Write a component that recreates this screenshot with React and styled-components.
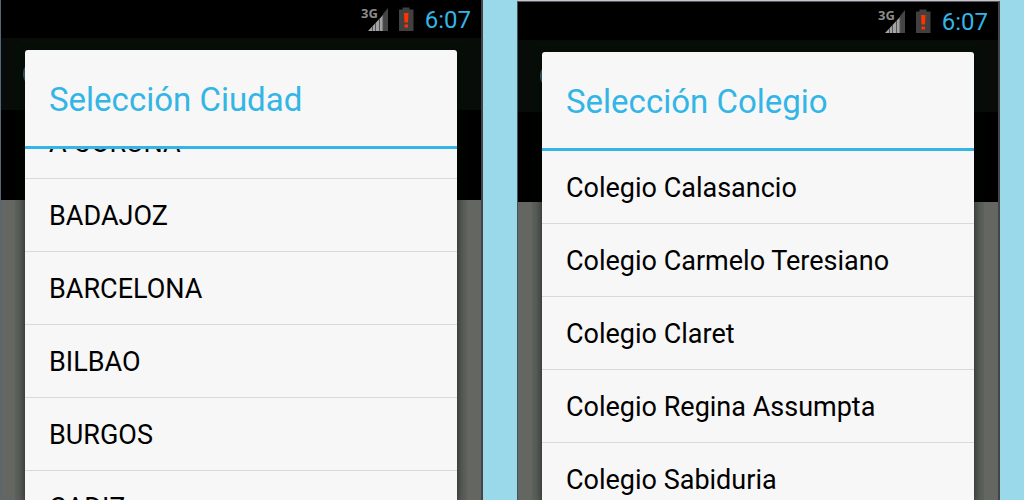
import React, { useEffect, useRef } from "react";
import styled, { createGlobalStyle } from "styled-components";

const GlobalStyle = createGlobalStyle`
  * {
    box-sizing: border-box;
  }

  body {
    margin: 0;
    background-color: #9ad9ea;
    font-family: Roboto, "Liberation Sans", sans-serif;
  }
`;

const StyledPage = styled.main`
  display: flex;
  gap: 34px;
  height: 100vh;
  padding-right: 24px;
  overflow: hidden;
`;

const StyledFrame = styled.div`
  flex: 1;
  min-width: 0;
  display: flex;
  border-top: ${props => (props.$framed ? "1px solid #c8c4d0" : "none")};
`;

const StyledPhone = styled.section`
  position: relative;
  flex: 1;
  min-width: 0;
  display: flex;
  flex-direction: column;
  background-color: #646662;
  border-left: 1px solid ${props => props.$edge};
  border-right: 2px solid #444;
  border-top: ${props => (props.$framed ? "1px solid #5a5a5e" : "none")};
`;

const StyledStatusBar = styled.header`
  display: flex;
  justify-content: flex-end;
  align-items: center;
  height: 38px;
  padding: 2px 10px 0 0;
  background-color: #000;
`;

const StyledNetwork = styled.svg`
  width: 28px;
  height: 26px;
  margin-right: 9px;
`;

const StyledBattery = styled.svg`
  width: 16px;
  height: 26px;
  margin-right: 11px;
`;

const StyledClock = styled.time`
  color: #33b5e5;
  font-size: 24px;
  line-height: 36px;
`;

const StyledActionBar = styled.div`
  display: flex;
  align-items: center;
  height: 72px;
  padding-left: 22px;
  background-color: #080c08;
`;

const StyledAppIcon = styled.span`
  width: 28px;
  height: 28px;
  border-radius: 50%;
  background-color: #4c7880;
`;

const StyledBanner = styled.div`
  height: 90px;
  background-color: #000;
`;

const StyledDialog = styled.div`
  position: absolute;
  top: 50px;
  bottom: 0;
  left: 24px;
  right: 24px;
  display: flex;
  flex-direction: column;
  background-color: #f7f7f7;
  border-radius: 3px 3px 0 0;
  box-shadow: 0 4px 10px rgba(0, 4, 0, 0.7), 0 0 0 10px rgba(0, 32, 8, 0.08);
`;

const StyledTitle = styled.h1`
  flex: none;
  height: 99px;
  margin: 0;
  padding: 2px 24px 0;
  border-bottom: 3px solid #33b5e5;
  color: #33b5e5;
  font-size: 33px;
  font-weight: 400;
  line-height: 96px;
`;

const StyledList = styled.ul`
  flex: 1;
  min-height: 0;
  margin: 0;
  padding: 0;
  list-style: none;
  overflow-y: auto;
  scrollbar-width: none;
`;

const StyledItem = styled.li`
  border-bottom: 1px solid #d9d9d9;
`;

const StyledOption = styled.button`
  display: block;
  width: 100%;
  height: 72px;
  padding: 2px 24px 0;
  border: none;
  background: none;
  color: #000;
  font-family: inherit;
  font-size: 27px;
  line-height: 70px;
  text-align: left;
`;

const NetworkIcon = () => (
  <StyledNetwork viewBox="0 0 28 26" aria-hidden="true">
    <path d="M7 24 L22 8 V24 Z" fill="#a4a4a4" />
    <path d="M22 24 V7 L27 1 V24 Z" fill="#454545" />
    <path
      d="M11.5 24V19M14.5 24V16M18.5 24V12M22 24V8"
      stroke="#555"
      fill="none"
    />
    <text
      x="0"
      y="11"
      fill="#8c8c8c"
      fontFamily="Noto Sans, sans-serif"
      fontSize="13"
      fontWeight="700"
    >
      3G
    </text>
  </StyledNetwork>
);

const BatteryIcon = () => (
  <StyledBattery viewBox="0 0 16 26" aria-hidden="true">
    <path d="M1 2.5H4.5V0.5H11.5V2.5H15.5V24H1Z" fill="#404040" />
    <path d="M6 6H10.5L10 15.5H6.5Z" fill="#ff3300" />
    <path d="M6.5 17.5H10V20.5H6.5Z" fill="#ff3300" />
  </StyledBattery>
);

const Phone = ({ title, options, scroll = 0, edge, framed }) => {
  const list = useRef(null);

  useEffect(() => {
    list.current.scrollTop = scroll;
  }, [scroll]);

  return (
    <StyledFrame $framed={framed}>
      <StyledPhone $edge={edge} $framed={framed}>
        <StyledStatusBar>
          <NetworkIcon />
          <BatteryIcon />
          <StyledClock>6:07</StyledClock>
        </StyledStatusBar>
        <StyledActionBar>
          <StyledAppIcon />
        </StyledActionBar>
        <StyledBanner />
        <StyledDialog role="dialog" aria-label={title}>
          <StyledTitle>{title}</StyledTitle>
          <StyledList ref={list}>
            {options.map(option => (
              <StyledItem key={option}>
                <StyledOption type="button">{option}</StyledOption>
              </StyledItem>
            ))}
          </StyledList>
        </StyledDialog>
      </StyledPhone>
    </StyledFrame>
  );
};

const cities = ["A CORUÑA", "BADAJOZ", "BARCELONA", "BILBAO", "BURGOS", "CADIZ"];

const schools = [
  "Colegio Calasancio",
  "Colegio Carmelo Teresiano",
  "Colegio Claret",
  "Colegio Regina Assumpta",
  "Colegio Sabiduria"
];

const App = () => (
  <>
    <GlobalStyle />
    <StyledPage>
      <Phone title="Selección Ciudad" options={cities} scroll={43} edge="#566579" />
      <Phone title="Selección Colegio" options={schools} edge="#45525a" framed />
    </StyledPage>
  </>
);

export default App;
